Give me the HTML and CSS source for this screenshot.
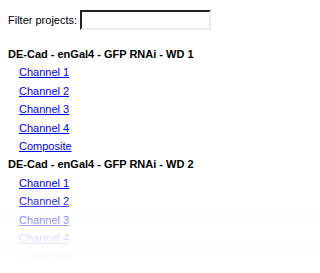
FILE: index.html
```html
<!DOCTYPE html>
<html>
<head>
<meta charset="utf-8">
<link rel="stylesheet" href="styles.css">
</head>
<body>
<div class="filter">
  <label class="filter-label" for="q">Filter projects:</label>
  <input class="filter-input" id="q" type="text">
</div>
<div class="projects">
  <div class="project">
    <div class="project-title">DE-Cad - enGal4 - GFP RNAi - WD 1</div>
    <ul class="links">
      <li><a href="#">Channel 1</a></li>
      <li><a href="#">Channel 2</a></li>
      <li><a href="#">Channel 3</a></li>
      <li><a href="#">Channel 4</a></li>
      <li><a href="#">Composite</a></li>
    </ul>
  </div>
  <div class="project">
    <div class="project-title">DE-Cad - enGal4 - GFP RNAi - WD 2</div>
    <ul class="links">
      <li><a href="#">Channel 1</a></li>
      <li><a href="#">Channel 2</a></li>
      <li><a href="#">Channel 3</a></li>
      <li><a href="#">Channel 4</a></li>
      <li><a href="#">Composite</a></li>
    </ul>
  </div>
</div>
<div class="fade"></div>
</body>
</html>
```

FILE: styles.css
```css
html, body {
  background: #fff;
}
body {
  margin: 0 8px;
  font-family: "Liberation Sans", Arial, sans-serif;
  font-size: 11px;
  color: #000;
}
.filter {
  display: flex;
  align-items: center;
  gap: 3px;
  margin-top: 10px;
}
.filter-label {
  line-height: 13px;
}
.filter-input {
  box-sizing: border-box;
  width: 131px;
  height: 20px;
  margin: 0;
  border: 2px inset #eee;
  border-top-color: #777;
  border-left-color: #777;
  border-right-color: #ececec;
  border-bottom-color: #ececec;
  background: #fff;
}
.projects {
  margin-top: 15px;
}
.project-title {
  font-weight: bold;
  line-height: 18.4px;
}
.links {
  list-style: none;
  margin: 0;
  padding: 0 0 0 11px;
}
.links li {
  line-height: 18.4px;
}
.links a {
  color: #0000ee;
  text-decoration: underline;
}
.fade {
  position: fixed;
  left: 0;
  right: 0;
  top: 195px;
  height: 78px;
  background: linear-gradient(to bottom,
    rgba(255,255,255,0) 0px,
    rgba(255,255,255,0.5) 23px,
    rgba(255,255,255,0.86) 41px,
    rgba(255,255,255,0.96) 59px,
    rgba(255,255,255,1) 68px);
  pointer-events: none;
}
```
